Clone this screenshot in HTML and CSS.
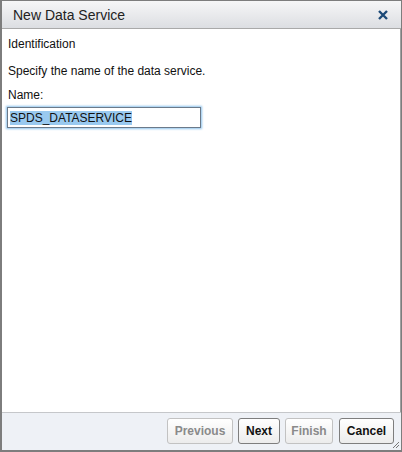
FILE: index.html
```html
<!DOCTYPE html>
<html>
<head>
<meta charset="utf-8">
<link rel="stylesheet" href="styles.css">
</head>
<body>
<div class="dialog">
  <div class="titlebar">
    <span class="title">New Data Service</span>
    <svg class="close" width="10" height="10" viewBox="0 0 10 10"><path d="M1 1 L9 9 M9 1 L1 9" stroke="#1c4a78" stroke-width="2.4" stroke-linecap="butt"/></svg>
  </div>
  <div class="content">
    <div class="heading">Identification</div>
    <div class="desc">Specify the name of the data service.</div>
    <div class="label">Name:</div>
    <div class="input"><span class="sel">SPDS_DATASERVICE</span></div>
  </div>
  <div class="footer">
    <button class="btn disabled w-prev">Previous</button>
    <button class="btn w-next">Next</button>
    <button class="btn disabled w-finish">Finish</button>
    <button class="btn w-cancel">Cancel</button>
    <svg class="grip" width="8" height="8" viewBox="0 0 8 8"><path d="M7 1 L1 7 M7 4 L4 7 M7 7 L7 7" stroke="#777" stroke-width="1"/></svg>
  </div>
</div>
</body>
</html>
```

FILE: styles.css
```css
html, body { margin: 0; padding: 0; }
body { font-family: "Liberation Sans", Arial, sans-serif; font-size: 12px; color: #111; }
.dialog {
  width: 402px; height: 452px; box-sizing: border-box;
  border: 1px solid #7d7d7d; border-bottom-width: 2px; border-left-width: 2px;
  display: flex; flex-direction: column; background: #fff; position: relative;
}
.titlebar {
  height: 27px; flex: none;
  background: linear-gradient(#f6f6f7, #dcdee2);
  border-bottom: 1px solid #a9a9a9;
  display: flex; align-items: center; justify-content: space-between;
  padding: 0 13px 0 11px;
}
.title { font-size: 14px; color: #222; }
.close { display: block; margin-top: 1px; }
.content {
  flex: 1; padding: 7px 6px 0 5px;
  border-right: 1px solid #a0a0a0;
}
.heading { line-height: 14px; margin-top: 1px; padding-left: 1px; }
.desc { line-height: 14px; margin-top: 13px; padding-left: 1px; }
.label { line-height: 14px; margin-top: 10px; padding-left: 1px; }
.input {
  margin-top: 5px; width: 194px; height: 21px; box-sizing: border-box;
  border: 1px solid #6b7a8a;
  box-shadow: 0 0 2px 1px #8fc3ec;
  padding: 3px 2px 0 2px; line-height: 14px;
}
.sel { background: #99c9ef; color: #111; }
.footer {
  height: 38px; flex: none; box-sizing: border-box;
  background: #eef1f6; border-top: 1px solid #c5c7ca;
  display: flex; justify-content: flex-end; align-items: flex-start;
  padding: 5px 7px 0 0; gap: 5px; position: relative;
}
.btn {
  height: 26px; box-sizing: border-box; padding: 0;
  font-family: "Liberation Sans", Arial, sans-serif; font-size: 12px; font-weight: bold;
  border: 1px solid #7e7e7e; border-radius: 3px;
  background: linear-gradient(#ffffff, #ececec);
  color: #111;
}
.btn.disabled { color: #8a8a8a; border-color: #c2c2c2; }
.w-prev { width: 66px; }
.w-next { width: 42px; }
.w-finish { width: 48px; }
.w-cancel { width: 55px; margin-left: 1px; }
.grip { position: absolute; right: 1px; bottom: 1px; }
```
